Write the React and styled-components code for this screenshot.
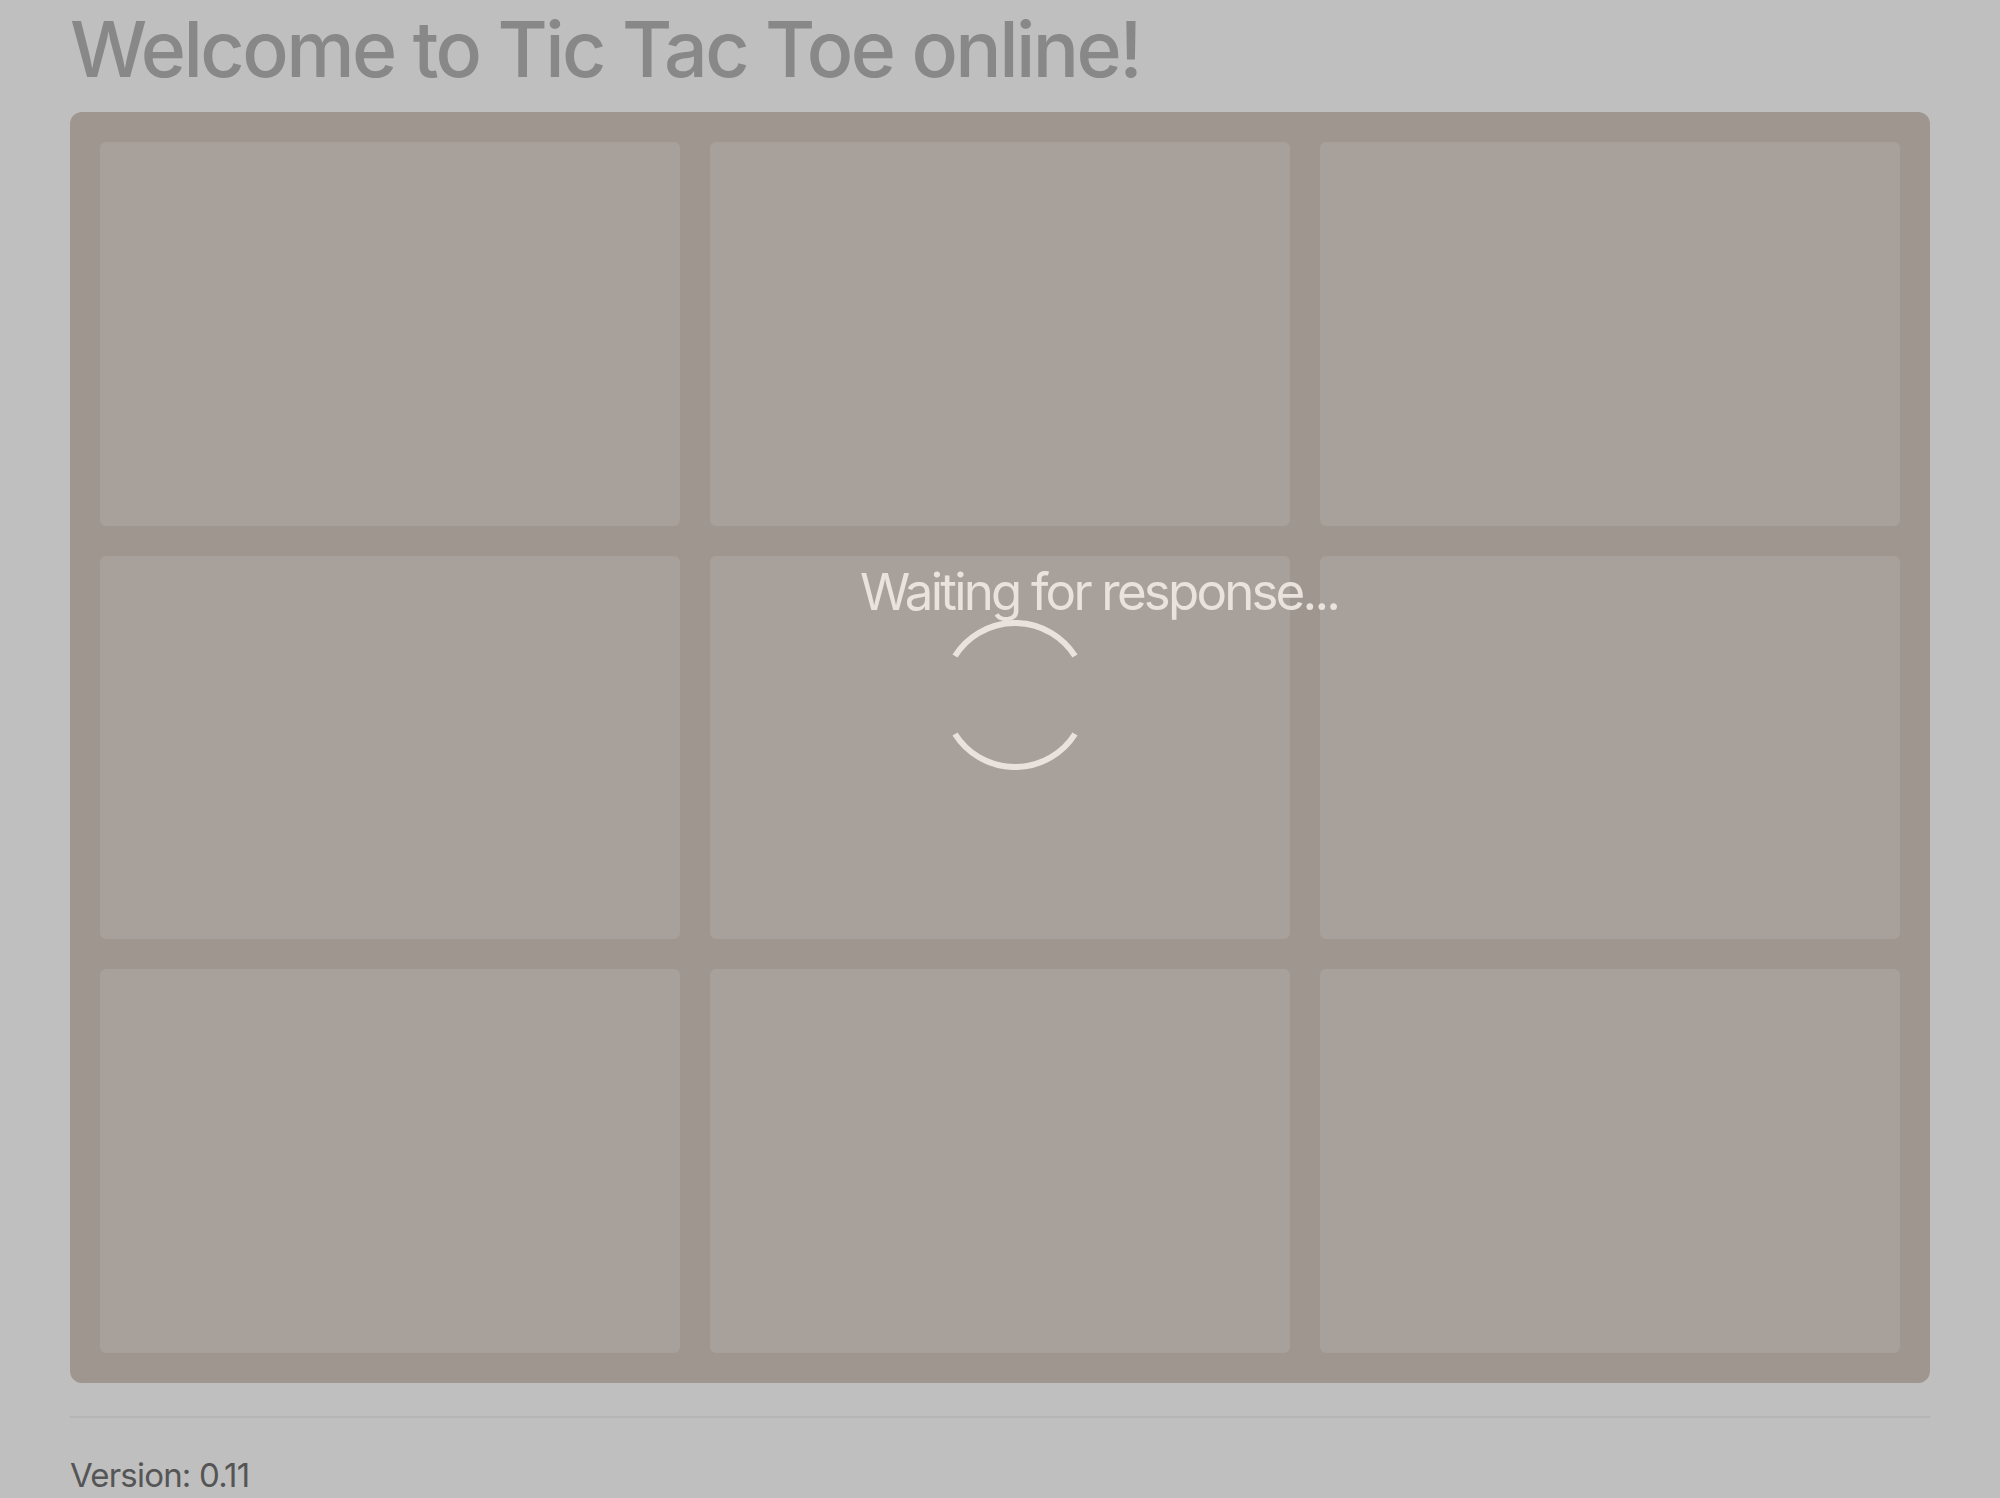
import React from 'react';
import styled, { createGlobalStyle } from 'styled-components';

const GlobalStyle = createGlobalStyle`
  html, body {
    margin: 0;
    padding: 0;
    background-color: #bfbfbf;
    font-family: 'Inter', 'Liberation Sans', sans-serif;
  }
`;

const Page = styled.div`
  position: relative;
  width: 2000px;
  min-height: 1498px;
  padding: 0 70px;
  box-sizing: border-box;
  overflow: hidden;
`;

const Title = styled.h1`
  margin: 0 0 24px;
  padding-top: 11px;
  font-size: 77px;
  line-height: 77px;
  font-weight: 500;
  letter-spacing: -2.55px;
  color: #888888;
  white-space: nowrap;
`;

const Board = styled.div`
  display: grid;
  grid-template-columns: repeat(3, 1fr);
  grid-template-rows: repeat(3, 1fr);
  gap: 30px;
  padding: 30px;
  height: 1271px;
  box-sizing: border-box;
  background: #9e968f;
  border-radius: 12px;
`;

const Cell = styled.div`
  background: #a8a09a;
  border-radius: 6px;
`;

const Divider = styled.hr`
  margin: 33px 0 0;
  border: none;
  height: 2px;
  background: #b5b5b5;
`;

const Version = styled.div`
  margin-top: 37px;
  font-size: 33px;
  letter-spacing: -0.8px;
  color: #555555;
`;

const Overlay = styled.div`
  position: absolute;
  left: 860px;
  top: 566px;
  display: flex;
  flex-direction: column;
  align-items: flex-start;
  gap: 3px;
`;

const Message = styled.div`
  font-size: 51px;
  line-height: 51px;
  letter-spacing: -2.8px;
  color: #e9e2dd;
  white-space: nowrap;
`;

const Spinner = styled.svg`
  margin-left: 80px;
  display: block;
`;

function Loader() {
  return (
    <Spinner width="150" height="150" viewBox="0 0 150 150">
      <g fill="none" stroke="#e9e2dd" strokeWidth="6">
        <path d="M135 36 A71 71 0 0 0 15 36" />
        <path d="M15 114 A71 71 0 0 0 135 114" />
      </g>
    </Spinner>
  );
}

export default function App() {
  const cells = Array.from({ length: 9 });
  return (
    <>
      <GlobalStyle />
      <Page>
        <Title>Welcome to Tic Tac Toe online!</Title>
        <Board>
          {cells.map((_, i) => (
            <Cell key={i} />
          ))}
        </Board>
        <Divider />
        <Version>Version: 0.11</Version>
        <Overlay>
          <Message>Waiting for response...</Message>
          <Loader />
        </Overlay>
      </Page>
    </>
  );
}
